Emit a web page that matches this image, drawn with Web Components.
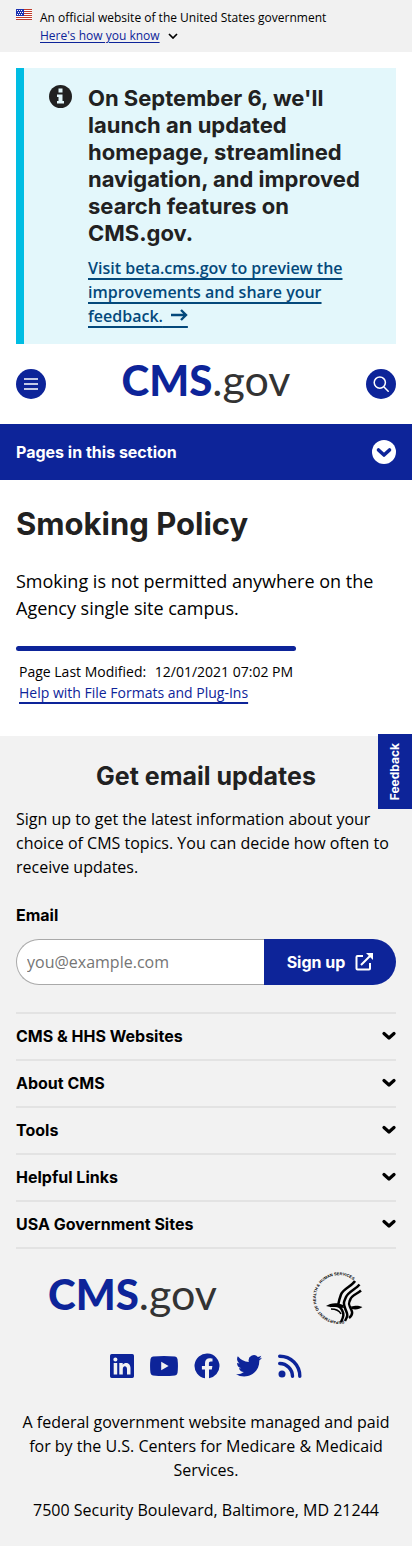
<!DOCTYPE html>
<html lang="en">
<head>
<meta charset="utf-8">
<meta name="viewport" content="width=device-width, initial-scale=1">
<title>Smoking Policy | CMS</title>
<style>
:root{--navy:#0d2499;--ink:#212121;--gutter:16px;--display:Inter,"Open Sans",sans-serif}
body{margin:0;background:#fff;color:#000;font:16px/24px "Open Sans",sans-serif}
</style>
</head>
<body>
<gov-banner>An official website of the United States government</gov-banner>
<site-alert>
  <span slot="title">On September 6, we'll launch an updated homepage, streamlined navigation, and improved search features on CMS.gov.</span>
  Visit beta.cms.gov to preview the improvements and share your feedback.</site-alert>
<site-header></site-header>
<section-nav>Pages in this section</section-nav>
<page-article>
  <span slot="title">Smoking Policy</span>
  Smoking is not permitted anywhere on the Agency single site campus.
</page-article>
<site-footer></site-footer>

<script>
function define(name, html) {
  const template = document.createElement('template');
  template.innerHTML = '<style>*{box-sizing:border-box}h1,h2,p{margin:0}h1,h2,button{font-family:var(--display);font-weight:700}button{font-size:inherit;line-height:inherit;border:0;padding:0;cursor:pointer}svg{display:block;flex:none}</style>' + html;
  customElements.define(name, class extends HTMLElement {
    constructor() {
      super();
      this.attachShadow({ mode: 'open' }).append(template.content.cloneNode(true));
    }
  });
}

define('cms-logo', `
<style>
:host{display:block;padding-bottom:8px}
a{display:flex;align-items:baseline;justify-content:center;color:var(--navy);text-decoration:none;font:900 42px/48px Lato,sans-serif}
span{font-weight:400;font-size:43px;color:#333}
</style>
<a href="#" aria-label="CMS.gov home">CMS<span>.gov</span></a>`);

define('gov-banner', `
<style>
:host{display:flex;gap:8px;padding:9px var(--gutter) 7px;background:#f1f1f1;font-size:12px;line-height:18px}
a{color:var(--navy);text-underline-offset:2px}
.row{display:flex;align-items:center;gap:8px}
</style>
<svg width="16" height="11" viewBox="0 0 16 11" aria-hidden="true">
  <path fill="#fff" d="M0 0h16v11H0z"/>
  <path stroke="#bf3b2b" stroke-width="1" d="M0 .5h16M0 2.5h16M0 4.5h16M0 6.5h16M0 8.5h16M0 10.5h16"/>
  <path fill="#1d33b1" d="M0 0h8v7H0z"/>
  <path stroke="#fff" stroke-dasharray="1 1" d="M1 1.5h6M2 3.5h5M1 5.5h6"/>
</svg>
<div><slot></slot>
  <div class="row"><a href="#">Here's how you know</a>
  <svg width="10" height="6" viewBox="0 0 10 6" fill="none" stroke="#000" stroke-width="1.700" aria-hidden="true"><path d="M1 1l4 4 4-4"/></svg></div>
</div>`);

define('site-alert', `
<style>
:host{display:flex;gap:16px;margin:16px var(--gutter) 0;padding:16px 24px;border-left:8px solid #00bde3;background:#e3f7fb}
h2{font-size:22px;line-height:27px;color:var(--ink);padding-top:1px;margin-bottom:9px}
a{display:block;color:#04497b;font-weight:600;text-decoration:underline 2px;text-underline-offset:4px;text-decoration-skip-ink:none}
.tail{position:relative;white-space:nowrap}
.tail svg{position:absolute;right:0;top:3px}
</style>
<svg width="24" height="24" viewBox="0 0 24 24" aria-hidden="true">
  <circle cx="12.500" cy="12.500" r="11.500" fill="#212121"/>
  <path fill="#e3f7fb" d="M10.500 4.500h4v4h-4zM9 10.500h5.500v6.500H16v2.500H9V17h1.500v-4H9z"/>
</svg>
<div>
  <h2><slot name="title"></slot></h2>
  <a href="#"><slot></slot><span class="tail">&nbsp;&nbsp;&nbsp;&nbsp;&nbsp;&nbsp;<svg width="17" height="14" viewBox="0 0 17 14" fill="none" stroke="#04497b" stroke-width="2.400" aria-hidden="true"><path d="M0 7h15M10 2l5 5-5 5"/></svg></span></a>
</div>`);

define('site-header', `
<style>
:host{display:flex;align-items:center;justify-content:space-between;height:80px;padding:0 var(--gutter)}
button{display:grid;place-items:center;width:30px;height:30px;border-radius:50%;background:var(--navy)}
</style>
<button aria-label="Menu"><svg width="14" height="12" viewBox="0 0 14 12" stroke="#fff" stroke-width="1.600"><path d="M0 1h14M0 6h14M0 11h14"/></svg></button>
<cms-logo></cms-logo>
<button aria-label="Search"><svg width="16" height="16" viewBox="0 0 16 16" fill="none" stroke="#fff" stroke-width="1.500" stroke-linecap="round"><circle cx="6.800" cy="6.600" r="5.600"/><path d="M11 11l4.200 4.200"/></svg></button>`);

define('section-nav', `
<style>
:host{display:block;background:var(--navy)}
button{display:flex;align-items:center;justify-content:space-between;width:100%;height:56px;padding:0 var(--gutter);background:none;color:#fff;text-align:left}
</style>
<button aria-expanded="false"><slot></slot>
<svg width="24" height="24" viewBox="0 0 24 24" aria-hidden="true"><circle cx="12" cy="12" r="12" fill="#fff"/><path d="M6.500 10l5.500 5 5.500-5" fill="none" stroke="#0d2499" stroke-width="3.600" stroke-linecap="round" stroke-linejoin="round"/></svg></button>`);

define('page-article', `
<style>
:host{display:block;padding:24px var(--gutter) 32px}
h1{font-size:31px;line-height:40px;color:var(--ink)}
.body{margin:24px 0;font-size:18px;line-height:27px}
.meta{display:inline-block;font-size:14px;line-height:21px}
.bar{height:5px;border-radius:3px;background:var(--navy)}
.rows{padding:10px 3px 0}
a{color:var(--navy);text-decoration:underline 2px;text-underline-offset:4px;text-decoration-skip-ink:none}
time{margin-left:5px}
</style>
<h1><slot name="title"></slot></h1>
<p class="body"><slot></slot></p>
<div class="meta"><div class="bar"></div>
<div class="rows"><div>Page Last Modified: <time datetime="2021-12-01T19:02">12/01/2021 07:02 PM</time></div>
<a href="#">Help with File Formats and Plug-Ins</a></div></div>`);

define('feedback-tab', `
<style>
:host{position:absolute;top:-2px;right:0}
button{display:grid;place-items:center;width:34px;height:75px;background:var(--navy);color:#fff;font-size:12px;line-height:16px}
span{writing-mode:vertical-rl;transform:rotate(180deg)}
</style>
<button><span>Feedback</span></button>`);

define('email-signup', `
<style>
:host{display:block}
h2{font-size:25px;line-height:32px;color:var(--ink);text-align:center;margin-bottom:15px}
p{margin-bottom:24px}
label{display:block;font-family:var(--display);font-weight:700;margin-bottom:12px}
form{display:flex;height:46px}
input{flex:1;min-width:0;border:1px solid #a9a9a9;border-right:0;border-radius:23px 0 0 23px;padding:0 10px;background:#fff;font:inherit;outline:0}
input::placeholder{color:#757575;opacity:1}
button{display:flex;align-items:center;justify-content:center;gap:10px;width:132px;border-radius:0 23px 23px 0;background:var(--navy);color:#fff}
</style>
<h2>Get email updates</h2>
<p>Sign up to get the latest information about your choice of CMS topics. You can decide how often to receive updates.</p>
<label for="email">Email</label>
<form><input id="email" type="email" placeholder="you@example.com"><button type="button">Sign up
<svg width="18" height="18" viewBox="0 0 18 18" fill="none" stroke="#fff" stroke-width="2" aria-hidden="true"><path d="M8 3H2.500q-1 0-1 1v11.500q0 1 1 1H14q1 0 1-1V10M6 12L15 3"/><path d="M11 0h7v7z" fill="#fff" stroke="none"/></svg></button></form>`);

define('footer-section', `
<style>
:host{display:block;border-bottom:2px solid #e3e3e3}
button{display:flex;align-items:center;justify-content:space-between;width:100%;height:45px;padding-bottom:1px;background:none;color:#000;text-align:left}
</style>
<button aria-expanded="false"><slot></slot>
<svg width="14" height="10" viewBox="0 0 14 10" fill="none" stroke="#000" stroke-width="3.200" stroke-linecap="round" stroke-linejoin="round" aria-hidden="true"><path d="M2 2.500l5 4.500 5-4.500"/></svg></button>`);

define('hhs-seal', `
<style>:host{display:block}text{font:700 4px "Liberation Sans",sans-serif}</style>
<svg width="52" height="52" viewBox="0 0 52 52" role="img" aria-label="Health and Human Services">
  <path id="ring" fill="none" d="M32 48.500A23 23 0 1 1 45 12"/>
  <text fill="#000"><textPath href="#ring">DEPARTMENT OF HEALTH &amp; HUMAN SERVICES</textPath></text>
  <g fill="none" stroke="#000" stroke-width="2.500" stroke-linejoin="round">
    <path d="M43 9C40 14 31 17 29 22.500S27 29 26 34"/>
    <path d="M47.500 12.500C44 17 36 20 34 25S31 30 33 36S37 42 33 49"/>
    <path d="M49 18.500C45 22 40 23 38.500 27S36 31 38 35S42 42 37 46"/>
    <path d="M18 34C24 32 28 34 30 38S32 44 29 50"/>
    <path stroke-width="1.500" d="M19 37C24 37 27 38 29 42"/>
  </g>
  <path d="M14 34c4-3 11-4 17-1l1 3c-6-1-12 0-18-2zM39 34.500c4-.500 6-1.500 11.500.500-3 2-6 3-11 2z"/>
</svg>`);

define('social-links', `
<style>:host{display:flex;align-items:center;justify-content:center;gap:16px;height:26px}a{display:block}svg{fill:var(--navy)}</style>
<a href="#" aria-label="LinkedIn"><svg width="24" height="24" viewBox="0 0 24 24"><path fill-rule="evenodd" d="M1.700 0h20.600Q24 0 24 1.700v20.600q0 1.700-1.700 1.700H1.700Q0 24 0 22.300V1.700Q0 0 1.700 0zM3.700 9.100v11.500h3.500V9.100zM5.400 3.400a2.050 2.050 0 1 0 0 4.100 2.050 2.050 0 0 0 0-4.100zM9.300 9.100v11.500h3.500v-5.700c0-3.700 4.200-3.400 4.200 0v5.700h3.500v-6.400c0-6.100-5.800-6.400-7.800-3.500V9.100z"/></svg></a>
<a href="#" aria-label="YouTube"><svg width="28" height="20" viewBox="0 0 28 20"><path fill-rule="evenodd" d="M3 .500Q14-.500 25 .500q2 .300 2.500 2.500.900 7 0 14-.500 2.200-2.500 2.500-11 1-22 0Q1 19.200.500 17q-.900-7 0-14Q1 .800 3 .500zM11.200 5.800v8.400l7.400-4.200z"/></svg></a>
<a href="#" aria-label="Facebook"><svg width="26" height="26" viewBox="0 0 26 26"><path d="M25.500 13A12.500 12.500 0 1 0 11 25.300v-8.700H7.900V13H11v-2.800c0-3.100 1.900-4.900 4.700-4.900 1.400 0 2.800.300 2.800.300v3h-1.600c-1.500 0-2 1-2 1.900V13h3.500l-.600 3.600H15v8.700A12.500 12.500 0 0 0 25.500 13z"/></svg></a>
<a href="#" aria-label="Twitter"><svg width="26" height="22" viewBox="0 0 24 20"><path d="M24 2.400a10 10 0 0 1-2.800.800A5 5 0 0 0 23.300.500a10 10 0 0 1-3.100 1.200 4.900 4.900 0 0 0-8.400 4.500A14 14 0 0 1 1.700 1 4.900 4.900 0 0 0 3.200 7.600 5 5 0 0 1 1 7v.100A4.900 4.900 0 0 0 4.900 12a5 5 0 0 1-2.200.100 4.900 4.900 0 0 0 4.600 3.400A10 10 0 0 1 0 17.500 14 14 0 0 0 7.500 19.700c9.500 0 14.300-8 14-14.800A10 10 0 0 0 24 2.400z"/></svg></a>
<a href="#" aria-label="RSS"><svg width="24" height="24" viewBox="0 0 24 24"><circle cx="4" cy="20" r="3.500"/><path d="M1.700 9.500A13 13 0 0 1 14.500 22.300M1.700 2.200A20 20 0 0 1 21.800 22.300" fill="none" stroke="#0d2499" stroke-width="3.400" stroke-linecap="round"/></svg></a>`);

define('site-footer', `
<style>
:host{display:block;position:relative;padding:24px var(--gutter);background:#f2f2f2}
nav{margin-top:27px;border-top:2px solid #e3e3e3}
.logos{display:flex;align-items:center;justify-content:space-between;padding:21px 32px 27px}
.text{text-align:center}
social-links{margin-bottom:31px}
.text+.text{margin-top:16px}
</style>
<feedback-tab></feedback-tab>
<email-signup></email-signup>
<nav aria-label="Footer">
<footer-section>CMS &amp; HHS Websites</footer-section>
<footer-section>About CMS</footer-section>
<footer-section>Tools</footer-section>
<footer-section>Helpful Links</footer-section>
<footer-section>USA Government Sites</footer-section>
</nav>
<div class="logos"><cms-logo></cms-logo><hhs-seal></hhs-seal></div>
<social-links></social-links>
<p class="text">A federal government website managed and paid for by the U.S. Centers for Medicare &amp; Medicaid Services.</p>
<p class="text">7500 Security Boulevard, Baltimore, MD 21244</p>`);
</script>
</body>
</html>
